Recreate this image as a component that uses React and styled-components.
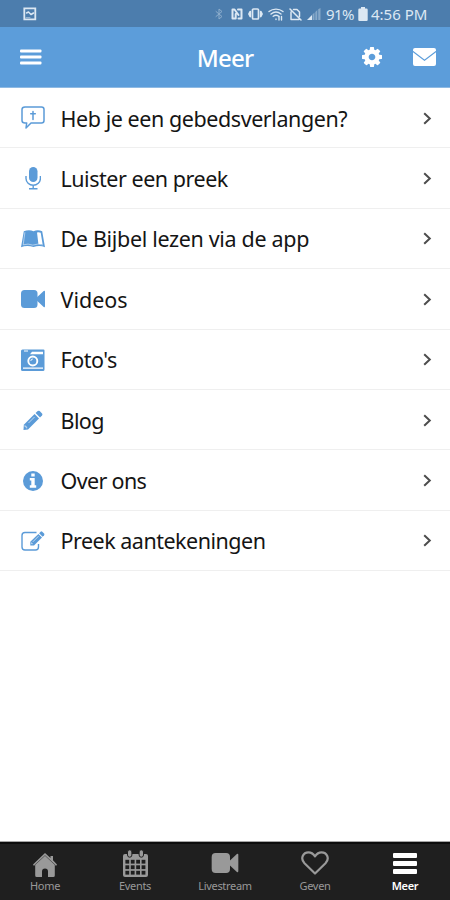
import React from "react";
import styled, { createGlobalStyle } from "styled-components";

const GlobalStyle = createGlobalStyle`
  * { box-sizing: border-box; }
  body {
    margin: 0;
    background: #fff;
    font-family: "Noto Sans", "Open Sans", sans-serif;
  }
`;

const BLUE = "#5b9bd8";

const Svg = ({ w, h, box, children }) => (
  <svg width={w} height={h} viewBox={box || `0 0 ${w} ${h}`} fill="currentColor">
    {children}
  </svg>
);

const Stroke = ({ w, h, width = 1.4, children }) => (
  <svg
    width={w}
    height={h}
    viewBox={`0 0 ${w} ${h}`}
    fill="none"
    stroke="currentColor"
    strokeWidth={width}
    strokeLinecap="round"
    strokeLinejoin="round"
  >
    {children}
  </svg>
);

const PictureIcon = () => (
  <Stroke w={14} h={14} width={1.8}>
    <path d="M1.3 1.3h11v11h-11z" strokeLinejoin="miter" />
    <path d="M3.5 6l2-1 2.500 2.500 2.500-1.500" strokeWidth="1.5" />
    <path d="M3 10.500h4" strokeWidth="1" opacity="0.5" />
  </Stroke>
);

const BluetoothIcon = () => (
  <Stroke w={8} h={12} width={1}>
    <path d="M1 3.5l6 5-3 2.5v-10l3 2.5-6 5" />
  </Stroke>
);

const NfcIcon = () => (
  <Stroke w={12} h={12} width={2}>
    <path d="M1.500 10.500V1.500h2l4 5.500M4.700 6v4.500H1.500M7 1.500h3.500v9H7.500" />
  </Stroke>
);

const VibrateIcon = () => (
  <Stroke w={15} h={12} width={1.7}>
    <rect x="4.5" y="1" width="6" height="10" rx="1" />
    <path d="M2.3 3.5L1 6l1.300 2.500zM12.700 3.500L14 6l-1.300 2.500z" />
  </Stroke>
);

const WifiIcon = () => (
  <Stroke w={16} h={13} width={1.4}>
    <path d="M1 3.5c4-3.2 10-3.2 14 0M3 6c3-2.3 7-2.3 10 0M5.2 8.3c1.8-1.3 3.8-1.3 5.6 0M8 11v.5" />
    <path d="M11 12V8.5M13.5 12V8.5" />
  </Stroke>
);

const NoSimIcon = () => (
  <Stroke w={13} h={13} width={1.5}>
    <path d="M1 1l11 11M4.500 1.500H8l2.500 2.500v4.500M2 4v7.500h8" />
  </Stroke>
);

const SignalIcon = () => (
  <Svg w={14} h={12}>
    <path d="M0 12l5-5v5z" />
    <path d="M5.500 12V6.500l2-2V12zM8.300 12V4l2-2v10zM11.200 12V1.200L13.500 0v12z" opacity="0.4" />
  </Svg>
);

const BatteryIcon = () => (
  <Svg w={10} h={14}>
    <path d="M3 0h4v1.5h1.5A1.2 1.2 0 0 1 9.7 2.7v10A1.2 1.2 0 0 1 8.5 14h-7A1.2 1.2 0 0 1 .3 12.7v-10A1.2 1.2 0 0 1 1.5 1.5H3z" />
  </Svg>
);

const MenuIcon = () => (
  <Svg w={22} h={16}>
    <rect y="0.5" width="21.5" height="3" rx="1" />
    <rect y="6.5" width="21.5" height="3" rx="1" />
    <rect y="12.5" width="21.5" height="3" rx="1" />
  </Svg>
);

const GearIcon = () => (
  <Svg w={20} h={20} box="0 0 1536 1536">
    <path d="M1024 768q0-106-75-181t-181-75-181 75-75 181 75 181 181 75 181-75 75-181zm512-109v222q0 12-8 23t-20 13l-185 28q-19 54-39 91 35 50 107 138 10 12 10 25t-9 23q-27 37-99 108t-94 71q-12 0-26-9l-138-108q-44 23-91 38-16 136-29 186-7 28-36 28H657q-14 0-24.500-8.500T621 1506l-28-184q-49-16-90-37l-141 107q-10 9-25 9-14 0-25-11-126-114-165-168-7-10-7-23 0-12 8-23 15-21 51-66.500t54-70.500q-27-50-41-99L29 913q-13-2-21-12.500T0 877V655q0-12 8-23t19-13l186-28q14-46 39-92-40-57-107-138-10-12-10-24 0-10 9-23 26-36 98.500-107.500T337 135q13 0 26 10l138 107q44-23 91-38 16-136 29-186 7-28 36-28h222q14 0 24.500 8.500T915 30l28 184q49 16 90 37l142-107q9-9 24-9 13 0 25 10 129 119 165 170 7 8 7 22 0 12-8 23-15 21-51 66.500t-54 70.500q26 50 41 98l183 28q13 2 21 12.500t8 23.500z" />
  </Svg>
);

const MailIcon = () => (
  <Svg w={23} h={18}>
    <path d="M2 0h19a2 2 0 0 1 2 2v.8L11.500 11.500 0 2.800V2a2 2 0 0 1 2-2z" />
    <path d="M0 4.200l11.500 8.800L23 4.200V16a2 2 0 0 1-2 2H2a2 2 0 0 1-2-2z" />
  </Svg>
);

const PrayerIcon = () => (
  <Stroke w={24} h={24} width={1.5}>
    <path d="M4 1h16.500Q23 1 23 3.500v11Q23 17 20.500 17H10l-5 5 .7-5H4Q1 17 1 14.500v-11Q1 1 4 1z" />
    <path d="M12 5.500v8M9.700 7.700h4.600" />
  </Stroke>
);

const MicIcon = () => (
  <Svg w={16} h={23}>
    <rect x="4" y="0" width="8.5" height="15" rx="4.25" />
    <path
      d="M1 9v2.500a7.200 6.800 0 0 0 14.400 0V9M8.200 18.500V21M4 21.700h8.500"
      fill="none"
      stroke="currentColor"
      strokeWidth="1.4"
    />
  </Svg>
);

const BookIcon = () => (
  <Svg w={24} h={18}>
    <path d="M2.800 1.300Q8-.6 12.500 1.200q4.500-1.700 8.700.1L24 17.300q-5.500-2.600-11.500-.2Q6 15 0 17.300z" />
    <path d="M16 2.400q2.200-.4 3.700.3l1.900 11.600q-2-.6-4.200-.2z" fill="#fff" />
    <path
      d="M3.900 2.300L2.200 14.800q5-1.500 9.600.3 5-1.900 10.200-.2"
      fill="none"
      stroke="#fff"
      strokeWidth=".5"
    />
  </Svg>
);

const VideoIcon = ({ w = 24, h = 18 }) => (
  <Svg w={w} h={h} box="0 0 24 18">
    <rect width="16.5" height="18" rx="3.5" />
    <path d="M16 7.300L22.700 1Q24 .3 24 1.700v14.600q0 1.400-1.300.7L16 10.700z" />
  </Svg>
);

const CameraIcon = () => (
  <Svg w={24} h={22}>
    <path d="M1.500 .5h21A1 1 0 0 1 23.500 1.500v19A1.500 1.500 0 0 1 22 22H1.500A1.500 1.500 0 0 1 0 20.500V2a1.500 1.500 0 0 1 1.500-1.500z" />
    <path d="M2 5.300h7l2-2.500h11v2.500zM2 18.500h20v1.300H2zM3 1.500h4v1H3z" fill="#fff" />
    <circle cx="11.800" cy="12" r="4.500" fill="none" stroke="#fff" strokeWidth="1.900" />
    <path d="M9.800 12a2 2 0 0 1 2-2" fill="none" stroke="#fff" strokeWidth=".9" />
  </Svg>
);

const PencilIcon = () => (
  <Svg w={20} h={20}>
    <path d="M14.700 1.100q1-.9 2 0l2.300 2.400q.9 1 0 2L17 7.500 12.600 3z" />
    <path d="M11.600 4L16 8.500 5 19.500.5 20l.3-5.200z" />
    <path
      d="M11.500 7l-6 6M2 15.200v1.600h1.700v1.600"
      fill="none"
      stroke="#fff"
      strokeWidth=".6"
    />
  </Svg>
);

const InfoIcon = () => (
  <Svg w={20} h={20}>
    <circle cx="10" cy="10" r="10" />
    <path d="M8.300 2.500h3.400v3H8.300zM6.800 7h4.900v7.300h1.500v2.500H6.800v-2.500h1.500V9.500H6.800z" fill="#fff" />
  </Svg>
);

const NotesIcon = () => (
  <Svg w={24} h={20}>
    <path
      d="M15.500 1.500H4Q1 1.500 1 4.500v11.500q0 3 3 3h10.500q3 0 3-3V13"
      fill="none"
      stroke="currentColor"
      strokeWidth="1.4"
    />
    <path d="M19.600.7q.8-.7 1.600 0l1.900 1.900q.7.8 0 1.600l-1.500 1.500-3.500-3.500z" />
    <path d="M17.400 3L21 6.500 13 14.500H9.300v-3.700z" />
    <path
      d="M17.500 5.200l-5.700 5.700M10.500 11.500v1.200h1.300"
      fill="none"
      stroke="#fff"
      strokeWidth=".6"
    />
  </Svg>
);

const ChevronIcon = () => (
  <svg width="9" height="13" viewBox="0 0 9 13" fill="none" stroke="#4d4d4d" strokeWidth="2">
    <path d="M1.200 1.200l5.600 5.300-5.600 5.300" />
  </svg>
);

const HomeIcon = () => (
  <Svg w={24} h={24}>
    <path d="M12 0l5.500 5V3h2.500v4.300l4 4.200-1 1.500-1.200-1.200V22.500q0 1.500-1.500 1.500H15v-5.500a3 3 0 0 0-6 0V24H3.700q-1.500 0-1.500-1.500V11.800L1 13 0 11.500z" />
    <path d="M1.500 12.300L12 2.500l10.500 9.800" fill="none" stroke="#1f1f1f" strokeWidth=".5" />
  </Svg>
);

const CalendarIcon = () => (
  <Svg w={25} h={27}>
    <path d="M2 4h21q2 0 2 2v19q0 2-2 2H2q-2 0-2-2V6q0-2 2-2z" />
    <g stroke="#1f1f1f" strokeWidth="1">
      <rect x="4.500" y="-.2" width="4.400" height="7.400" rx="2.200" />
      <rect x="16.100" y="-.2" width="4.400" height="7.400" rx="2.200" />
    </g>
    <g fill="#1f1f1f">
      {[9.8, 15.3, 20.8].map((y) =>
        [2.4, 7.8, 13.2, 18.6].map((x) => (
          <rect key={`${x}-${y}`} x={x} y={y} width="3.8" height="3.8" />
        ))
      )}
    </g>
  </Svg>
);

const HeartIcon = () => (
  <Stroke w={28} h={24} width={2.2}>
    <path d="M14 22.500L3.500 12.300C-1 7.500 2 1.300 7.500 1.300c3 0 5 1.700 6.500 4 1.500-2.300 3.500-4 6.500-4 5.500 0 8.500 6.200 4 11z" />
  </Stroke>
);

const BarsIcon = () => (
  <Svg w={24} h={21}>
    <rect y="0" width="24" height="5" rx="1" />
    <rect y="8" width="24" height="5" rx="1" />
    <rect y="16" width="24" height="5" rx="1" />
  </Svg>
);

const Screen = styled.div`
  width: 450px;
  height: 900px;
  display: flex;
  flex-direction: column;
  overflow: hidden;
  background: #fff;

  svg {
    display: block;
    flex-shrink: 0;
  }
`;

const StatusBar = styled.div`
  height: 27px;
  padding: 1px 21px 0 23px;
  display: flex;
  align-items: center;
  justify-content: space-between;
  background: #4c7dad;
  color: #dce8f3;
`;

const StatusIcons = styled.div`
  display: flex;
  align-items: center;
  gap: 5px;
`;

const Faded = styled.span`
  opacity: 0.45;
  margin-right: 3px;
`;

const StatusText = styled.span`
  width: ${(p) => p.$width}px;
  margin: -1px 0 0 ${(p) => p.$pull || 0}px;
  font-size: 15px;
  line-height: 16px;
  letter-spacing: ${(p) => p.$spacing || 0}px;
  white-space: nowrap;
`;

const Header = styled.header`
  height: 61px;
  padding: 0 14px 0 20px;
  display: grid;
  grid-template-columns: 1fr auto 1fr;
  align-items: center;
  background: #5c9dda;
  border-bottom: 1px solid #8fbae3;
  color: #fff;
`;

const Title = styled.h1`
  margin: 2px 0 0 -6px;
  font-size: 24px;
  font-weight: 500;
  line-height: 30px;
  letter-spacing: -0.8px;
`;

const Actions = styled.div`
  display: flex;
  align-items: center;
  justify-content: flex-end;
  gap: 31px;
`;

const List = styled.ul`
  flex: 1;
  margin: 0;
  padding: 0;
  list-style: none;
`;

const Row = styled.li`
  height: 60.4px;
  padding: 1px 18px 0 17px;
  display: flex;
  align-items: center;
  border-bottom: 1px solid #efefef;
`;

const RowIcon = styled.span`
  width: 32px;
  display: flex;
  justify-content: center;
  color: ${BLUE};
`;

const RowLabel = styled.span`
  flex: 1;
  padding: 1px 0 0 11.5px;
  color: #151515;
  font-size: 21.5px;
  line-height: 30px;
  white-space: nowrap;
  letter-spacing: ${(p) => p.$spacing}px;
`;

const TabBar = styled.nav`
  height: 59px;
  display: flex;
  background: #1f1f1f;
  border-top: 1px solid #a5a5a5;
  box-shadow: inset 0 2px 0 #0c0c0c;
`;

const Tab = styled.div`
  flex: 1;
  display: flex;
  flex-direction: column;
  align-items: center;
  color: ${(p) => (p.$active ? "#fff" : "#999")};
  font-weight: ${(p) => (p.$active ? 600 : 400)};
`;

const TabIcon = styled.span`
  height: 37px;
  padding-top: ${(p) => p.$top}px;
`;

const TabLabel = styled.span`
  font-size: 11px;
  line-height: 14px;
  letter-spacing: -0.3px;
`;

const items = [
  { label: "Heb je een gebedsverlangen?", icon: PrayerIcon, spacing: -0.43 },
  { label: "Luister een preek", icon: MicIcon, spacing: -0.47 },
  { label: "De Bijbel lezen via de app", icon: BookIcon, spacing: -0.33 },
  { label: "Videos", icon: VideoIcon, spacing: 0 },
  { label: "Foto's", icon: CameraIcon, spacing: -0.5 },
  { label: "Blog", icon: PencilIcon, spacing: -0.6 },
  { label: "Over ons", icon: InfoIcon, spacing: -0.65 },
  { label: "Preek aantekeningen", icon: NotesIcon, spacing: -0.5 },
];

const tabs = [
  { label: "Home", icon: <HomeIcon />, top: 11 },
  { label: "Events", icon: <CalendarIcon />, top: 8 },
  { label: "Livestream", icon: <VideoIcon w={28} h={20} />, top: 11 },
  { label: "Geven", icon: <HeartIcon />, top: 9 },
  { label: "Meer", icon: <BarsIcon />, top: 11, active: true },
];

const App = () => {
  return (
    <>
      <GlobalStyle />
      <Screen>
        <StatusBar>
          <PictureIcon />
          <StatusIcons>
            <Faded>
              <BluetoothIcon />
            </Faded>
            <NfcIcon />
            <VibrateIcon />
            <WifiIcon />
            <NoSimIcon />
            <SignalIcon />
            <StatusText $width={27} $spacing={-0.6}>91%</StatusText>
            <BatteryIcon />
            <StatusText $width={58} $pull={-2}>4:56 PM</StatusText>
          </StatusIcons>
        </StatusBar>
        <Header>
          <MenuIcon />
          <Title>Meer</Title>
          <Actions>
            <GearIcon />
            <MailIcon />
          </Actions>
        </Header>
        <List>
          {items.map(({ label, icon: Icon, spacing }) => (
            <Row key={label}>
              <RowIcon>
                <Icon />
              </RowIcon>
              <RowLabel $spacing={spacing}>{label}</RowLabel>
              <ChevronIcon />
            </Row>
          ))}
        </List>
        <TabBar>
          {tabs.map(({ label, icon, top, active }) => (
            <Tab key={label} $active={active}>
              <TabIcon $top={top}>{icon}</TabIcon>
              <TabLabel>{label}</TabLabel>
            </Tab>
          ))}
        </TabBar>
      </Screen>
    </>
  );
};

export default App;
